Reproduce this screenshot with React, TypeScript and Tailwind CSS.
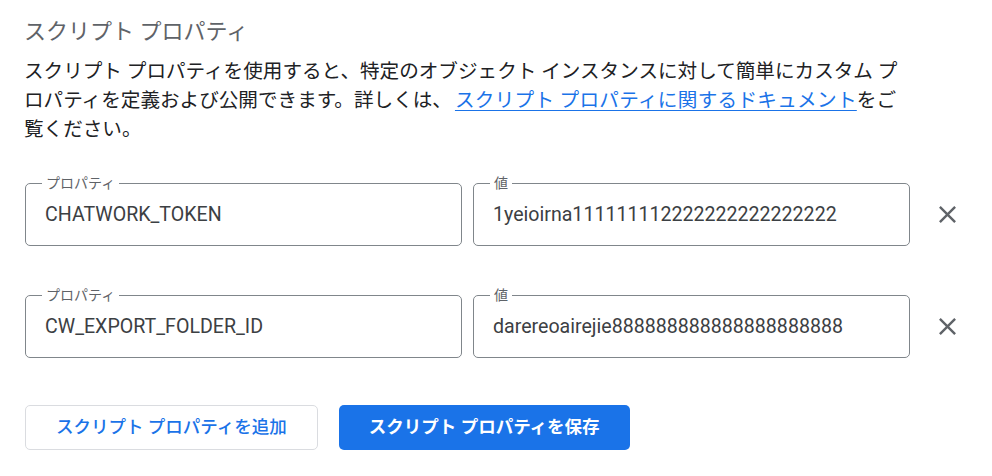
import React from "react";

const font = "font-['Roboto','Noto_Sans_CJK_JP',sans-serif]";

const rows = [
  { key: "CHATWORK_TOKEN", value: "1yeioirna111111112222222222222222" },
  { key: "CW_EXPORT_FOLDER_ID", value: "darereoairejie888888888888888888888" },
];

function Field({ label, value }: { label: string; value: string }) {
  return (
    <div className="relative flex h-[63px] w-[437px] items-center rounded-[5px] border border-[#80868b] px-[19px]">
      <span className="absolute -top-[11px] left-[16px] bg-white px-[4px] text-[14px] leading-[20px] text-[#5f6368]">
        {label}
      </span>
      <span className="text-[19.6px] text-[#3c4043]">{value}</span>
    </div>
  );
}

function CloseIcon() {
  return (
    <svg viewBox="0 0 24 24" className="h-[29px] w-[29px] fill-[#5f6368]">
      <path d="M19 6.41L17.59 5 12 10.59 6.41 5 5 6.41 10.59 12 5 17.59 6.41 19 12 13.41 17.59 19 19 17.59 13.41 12z" />
    </svg>
  );
}

export default function App() {
  return (
    <div className={`${font} min-h-[476px] w-[992px] bg-white px-6 pt-4`}>
      <h2 className="text-[22px] leading-[32px] text-[#5f6368]">スクリプト プロパティ</h2>
      <p className="mt-[9px] max-w-[886px] text-[19.6px] leading-[29px] text-[#202124]">
        スクリプト プロパティを使用すると、特定のオブジェクト インスタンスに対して簡単にカスタム プロパティを定義および公開できます。詳しくは、
        <a href="#" className="ml-[3px] text-[#1a73e8] tracking-[0.3px] underline underline-offset-[3px]">
          スクリプト プロパティに関するドキュメント
        </a>
        をご覧ください。
      </p>

      <div className="ml-px mt-[39px] flex flex-col gap-[49px]">
        {rows.map((r) => (
          <div key={r.key} className="flex items-center">
            <div className="flex gap-[11px]">
              <Field label="プロパティ" value={r.key} />
              <Field label="値" value={r.value} />
            </div>
            <button className="ml-[17px] flex h-12 w-12 items-center justify-center rounded-full">
              <CloseIcon />
            </button>
          </div>
        ))}
      </div>

      <div className="ml-px mt-[47px] flex gap-[21px]">
        <button className="h-[45px] rounded-[5px] border border-[#dadce0] bg-white px-[30px] text-[17.5px] font-medium text-[#1a73e8]">
          スクリプト プロパティを追加
        </button>
        <button className="h-[45px] rounded-[5px] bg-[#1a73e8] px-[30px] text-[17.5px] font-bold text-white">
          スクリプト プロパティを保存
        </button>
      </div>
    </div>
  );
}
